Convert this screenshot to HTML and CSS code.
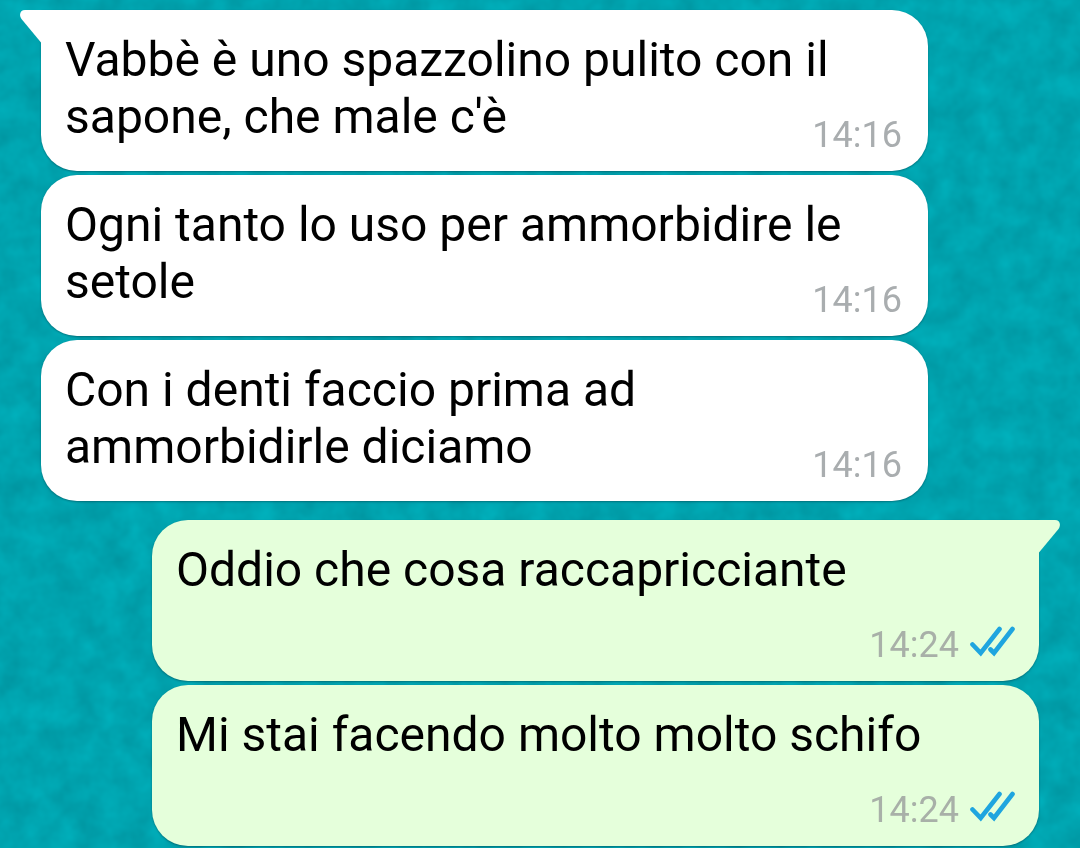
FILE: index.html
```html
<!DOCTYPE html>
<html lang="it">
<head>
<meta charset="utf-8">
<meta name="viewport" content="width=device-width, initial-scale=1">
<title>Chat</title>
<link rel="stylesheet" href="styles.css">
</head>
<body>
<svg class="wallpaper" aria-hidden="true">
  <filter id="grain" x="0" y="0" width="100%" height="100%" color-interpolation-filters="sRGB">
    <feTurbulence type="fractalNoise" baseFrequency="0.04" numOctaves="3" seed="8"/>
    <feColorMatrix values="0 0 0 0 0  .13 0 0 0 .575  .13 0 0 0 .62  0 0 0 0 1"/>
  </filter>
  <rect width="100%" height="100%" filter="url(#grain)"/>
</svg>
<svg class="symbols" aria-hidden="true">
  <symbol id="ticks" viewBox="0 0 45 38">
    <path d="M2.5 18.5 10.700 27 29.500 3M20.500 23.500 24 27 42.500 3" fill="none" stroke="currentColor" stroke-width="4.600" stroke-linecap="round" stroke-linejoin="miter"/>
  </symbol>
  <symbol id="tail" viewBox="0 0 22 34">
    <path d="M22 0H5C.5 0-1.500 4.500 1.500 9L21 32.500 22 33Z" fill="currentColor"/>
  </symbol>
</svg>
<main class="chat">
  <section class="group received">
    <article class="bubble first">
      <svg class="tail" aria-hidden="true"><use href="#tail"/></svg>
      <p class="text">Vabbè è uno spazzolino pulito con il sapone, che male c'è</p>
      <div class="meta"><time datetime="14:16">14:16</time></div>
    </article>
    <article class="bubble">
      <p class="text">Ogni tanto lo uso per ammorbidire le setole</p>
      <div class="meta"><time datetime="14:16">14:16</time></div>
    </article>
    <article class="bubble">
      <p class="text">Con i denti faccio prima ad ammorbidirle diciamo</p>
      <div class="meta"><time datetime="14:16">14:16</time></div>
    </article>
  </section>
  <section class="group sent">
    <article class="bubble first">
      <svg class="tail" aria-hidden="true"><use href="#tail"/></svg>
      <p class="text">Oddio che cosa raccapricciante</p>
      <div class="meta"><time datetime="14:24">14:24</time><svg class="ticks" role="img" aria-label="Letto"><use href="#ticks"/></svg></div>
    </article>
    <article class="bubble">
      <p class="text">Mi stai facendo molto molto schifo</p>
      <div class="meta"><time datetime="14:24">14:24</time><svg class="ticks" role="img" aria-label="Letto"><use href="#ticks"/></svg></div>
    </article>
  </section>
</main>
</body>
</html>
```
FILE: styles.css
```css
* {
  box-sizing: border-box;
}

body {
  margin: 0;
  background: #00a4b0;
  color: #000;
  font-family: Roboto, "Noto Sans", sans-serif;
}

.wallpaper {
  position: fixed;
  inset: 0;
  width: 100%;
  height: 100%;
  z-index: -1;
}

.symbols {
  display: none;
}

.chat {
  display: flex;
  flex-direction: column;
  gap: 19px;
  padding: 10px 41px 2px;
}

.group {
  display: flex;
  flex-direction: column;
  gap: 4px;
}

.received {
  --bubble: #fff;
  --time: #a9adaf;
  margin-right: 111px;
}

.sent {
  --bubble: #e5ffdb;
  --time: #a8b0a8;
  margin-left: 111px;
}

.bubble {
  position: relative;
  display: grid;
  padding: 21px 24px 15px;
  border-radius: 36px;
  background: var(--bubble);
  box-shadow: 0 1px 2px rgba(0, 40, 50, 0.4);
}

.received .bubble {
  padding-right: 26px;
}

.received .first {
  border-top-left-radius: 0;
}

.sent .first {
  border-top-right-radius: 0;
}

.text,
.meta {
  grid-area: 1 / 1;
}

.text {
  min-height: 125px;
  margin: 0;
  font-size: 48px;
  line-height: 57px;
}

.meta {
  display: flex;
  align-items: center;
  align-self: end;
  justify-self: end;
  gap: 11px;
  color: var(--time);
  font-size: 36px;
  line-height: 42px;
}

.ticks {
  width: 45px;
  height: 38px;
  color: #1fa5df;
}

.tail {
  position: absolute;
  top: 0;
  width: 22px;
  height: 34px;
  color: var(--bubble);
}

.received .tail {
  left: -21px;
}

.sent .tail {
  right: -21px;
  transform: scaleX(-1);
}
```
